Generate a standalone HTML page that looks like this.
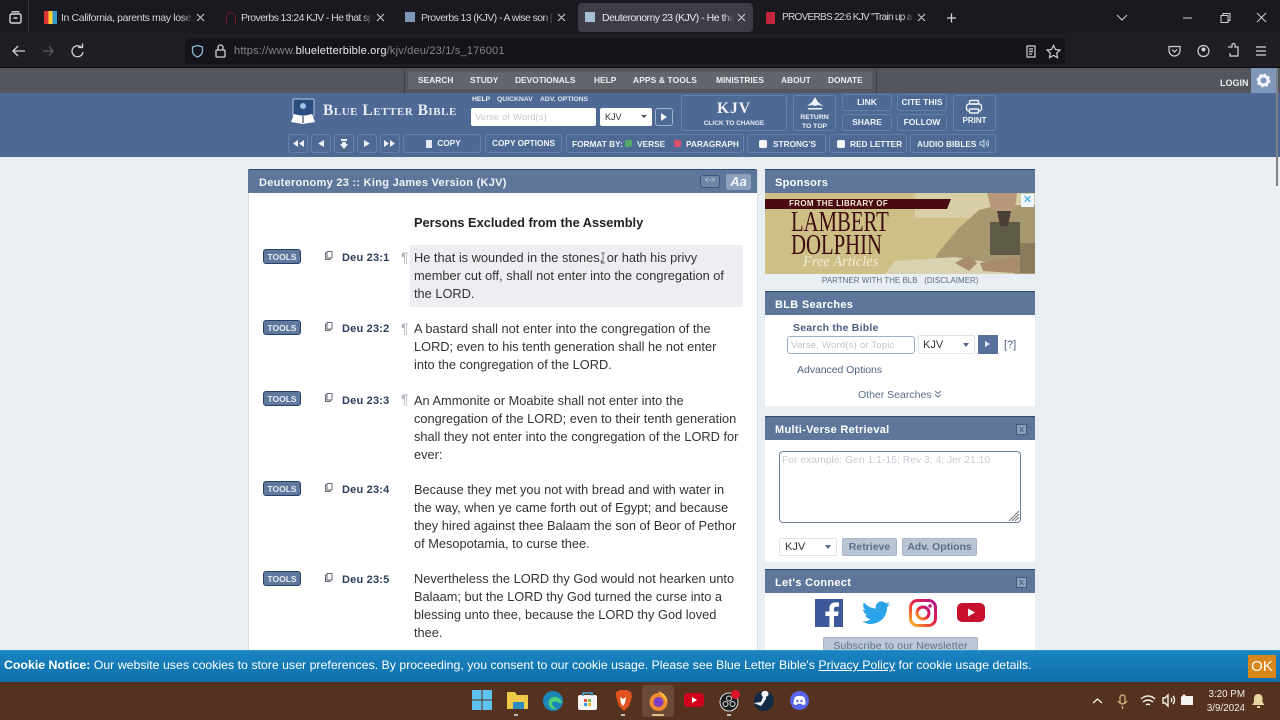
<!DOCTYPE html>
<html><head><meta charset="utf-8"><style>
html,body{margin:0;padding:0;width:1280px;height:720px;overflow:hidden;background:#e9eef2;font-family:"Liberation Sans",sans-serif}
.a,.t{position:absolute}
.t{white-space:nowrap}
.tab{font-size:10.5px;color:#d4d3d8;top:12px;letter-spacing:-.38px;overflow:hidden;-webkit-mask-image:linear-gradient(90deg,#000 92%,transparent);mask-image:linear-gradient(90deg,#000 92%,transparent)}
.nav{font-size:8.4px;font-weight:bold;color:#eceff2;top:75px}
.btn{position:absolute;border:1px solid #6480a6;border-radius:3px;box-sizing:border-box;color:#f0f3f7;font-size:8.5px;font-weight:bold;text-align:center}
.v{font-size:12.8px;color:#333;line-height:18px}
.ref{font-size:11px;font-weight:bold;color:#2c3e5e;letter-spacing:.2px}
.tools{position:absolute;left:263px;width:38px;height:15px;box-sizing:border-box;background:#5f789c;border:1px solid #27406a;border-radius:3px;color:#e6ebf2;font-size:8.5px;font-weight:bold;text-align:center;line-height:14px}
.ph{position:absolute;background:#5e7699;border-top:1px solid #2f4a75;box-sizing:border-box;color:#fff;font-size:11px;font-weight:bold;letter-spacing:.3px;left:765px;width:270px;height:24px;line-height:26px;padding-left:10px}
.panel{position:absolute;left:765px;width:270px;background:#fff}
.cl{position:absolute;left:1016px;width:11px;height:11px;background:#8fa2bc;border:1px solid #3f5a82;box-sizing:border-box;color:#4f6585;font-size:9px;font-weight:bold;text-align:center;line-height:8px}
.p{font-size:14px;color:#b0b5bc}
</style></head><body>
<!-- browser chrome -->
<div class="a" style="left:0;top:0;width:1280px;height:33px;background:#1a1920"></div>
<div class="a" style="left:0;top:33px;width:1280px;height:34px;background:#1f1e25"></div>
<div class="a" style="left:0;top:67px;width:1280px;height:1px;background:#0c0c10"></div>
<div class="a" style="left:28px;top:0;width:1px;height:33px;background:#3a3940"></div>
<svg class="a" style="left:8px;top:10px" width="16" height="16" fill="none" stroke="#d8d8dc" stroke-width="1.4"><rect x="2" y="4" width="11" height="9" rx="1.5"/><path d="M3.5 1.8h8M5.5 8h4"/></svg>
<div class="a" style="left:578px;top:3px;width:175px;height:29px;background:#3e3d47;border-radius:4px"></div>

<div class="a" style="left:44px;top:11px;width:13px;height:13px;background:linear-gradient(90deg,#d33 0 33%,#fc3 33% 66%,#39c 66%)"></div>
<div class="t tab" style="left:61px;width:132px">In California, parents may lose custody</div>
<div class="a" style="left:226px;top:12px;width:10px;height:12px;border:1.5px solid #6d1a24;border-bottom:0;border-radius:6px 6px 0 0;box-sizing:border-box"></div>
<div class="t tab" style="left:241px;width:132px;letter-spacing:-.6px">Proverbs 13:24 KJV - He that spareth</div>
<div class="a" style="left:405px;top:12px;width:10px;height:10px;background:#7d97b8"></div>
<div class="t tab" style="left:421px;width:133px;letter-spacing:-.6px">Proverbs 13 (KJV) - A wise son [</div>
<div class="a" style="left:585px;top:12px;width:10px;height:10px;background:#a6bdd6"></div>
<div class="t tab" style="left:602px;width:132px;color:#e8e8ec;letter-spacing:-.5px">Deuteronomy 23 (KJV) - He that is</div>
<div class="a" style="left:766px;top:12px;width:9px;height:12px;background:#c2243d"></div>
<div class="t tab" style="left:782px;width:132px;font-size:10px;letter-spacing:-.7px">PROVERBS 22:6 KJV "Train up a child</div>
<svg class="a" style="left:0;top:0" width="1280" height="68" fill="none" stroke="#d2d2d6" stroke-width="1">
<path d="M197 14l7 7m0-7l-7 7M377 14l7 7m0-7l-7 7M558 14l7 7m0-7l-7 7M738 14l7 7m0-7l-7 7M918 14l7 7m0-7l-7 7"/>
<path d="M947 18h9M951.500 13.500v9" stroke-width="1.300"/>
<path d="M1117 15l5 5 5-5"/>
<path d="M1183 18h9"/>
<path d="M1221 15.500h7v7h-7zM1223 15.500v-2h7v7h-2"/>
<path d="M1257 13l9 9m0-9l-9 9"/>
<path d="M25 51H14m4-5l-5 5 5 5" stroke-width="1.300"/>
<path d="M43 51h10m-4-4.500l4 4.500-4 4.500" stroke="#5e5d64" stroke-width="1.300"/>
<path d="M82 48a5.500 5.500 0 1 0 1 4M78 47.500h4.500v-4" stroke-width="1.300"/>
<path d="M1169 46.500h11v4a5.500 5.500 0 0 1-11 0zM1172 49.500l2.500 2.500 2.500-2.500" stroke-width="1.200"/>
<circle cx="1203.500" cy="51" r="5.500" stroke-width="1.200"/><circle cx="1203.500" cy="49.500" r="2" fill="#d2d2d6" stroke="none"/>
<path d="M1228 47h4v-2a1.500 1.500 0 0 1 3 0v2h3v9h-8v-3" stroke-width="1.200"/>
<path d="M1256 47h10M1256 51h10M1256 55h10" stroke-width="1.300"/>
</svg>
<div class="a" style="left:185px;top:38px;width:880px;height:26px;background:#15141a;border-radius:3px"></div>
<svg class="a" style="left:185px;top:38px" width="50" height="26" fill="none" stroke="#d2d2d6" stroke-width="1.300"><path d="M12.500 7.500l5 1.500v4c0 3-2.500 5-5 6-2.500-1-5-3-5-6V9z" stroke="#8fb8d8"/><rect x="31" y="12" width="9" height="7" rx="1"/><path d="M33 12V9.500a2.500 2.500 0 0 1 5 0V12"/></svg>
<div class="t" style="left:234px;top:45px;font-size:11.100px;color:#85848b;letter-spacing:.15px">https://www.<span style="color:#e8e8ec">blueletterbible.org</span>/kjv/deu/23/1/s_176001</div>
<svg class="a" style="left:1020px;top:38px" width="46" height="26" fill="none" stroke="#d2d2d6" stroke-width="1.200"><path d="M7 8h8v11H7zM9 11h4M9 13.500h4M9 16h3"/><path d="M33.500 7.500l2 4 4.500.6-3.300 3 .8 4.500-4-2.200-4 2.200.8-4.500-3.300-3 4.500-.6z"/></svg>

<!-- site nav -->
<div class="a" style="left:0;top:68px;width:1280px;height:25px;background:#53565c"></div>
<div class="a" style="left:404px;top:68px;width:1px;height:25px;background:#3e4045"></div>
<div class="a" style="left:876px;top:68px;width:1px;height:25px;background:#3e4045"></div>
<div class="a" style="left:408px;top:72px;width:464px;height:17px;background:#62666c"></div>
<div class="t nav" style="left:418px">SEARCH</div>
<div class="t nav" style="left:470px">STUDY</div>
<div class="t nav" style="left:515px">DEVOTIONALS</div>
<div class="t nav" style="left:594px">HELP</div>
<div class="t nav" style="left:633px;letter-spacing:.15px">APPS &amp; TOOLS</div>
<div class="t nav" style="left:716px">MINISTRIES</div>
<div class="t nav" style="left:781px">ABOUT</div>
<div class="t nav" style="left:828px">DONATE</div>
<div class="t" style="left:1220px;top:78px;font-size:9px;font-weight:bold;color:#e8eaee">LOGIN</div>
<div class="a" style="left:1251px;top:68px;width:25px;height:25px;background:#7e96b8"></div>
<svg class="a" style="left:1256px;top:73px" width="15" height="15"><circle cx="7.500" cy="7.500" r="4.500" fill="none" stroke="#f0f3f7" stroke-width="3"/><circle cx="7.500" cy="7.500" r="6" fill="none" stroke="#f0f3f7" stroke-width="2" stroke-dasharray="2.400 2.300"/></svg>

<!-- blue header -->
<div class="a" style="left:0;top:93px;width:1280px;height:64px;background:#4e6a94"></div>
<svg class="a" style="left:290px;top:98px" width="28" height="28"><rect x="3" y="1" width="21" height="17" rx="1" fill="#2a4d80" stroke="#b8c8da"/><circle cx="13" cy="8" r="3" fill="#9cc4e6"/><path d="M1 24l3-8 9 2 9-2 3 8-12 2z" fill="#fff"/><path d="M13 18v7" stroke="#223" stroke-width="1"/></svg>
<div class="t" style="left:323px;top:102px;font-family:'Liberation Serif',serif;font-size:15.500px;font-weight:bold;color:#e6ebf3;letter-spacing:.52px;font-variant:small-caps">Blue Letter Bible</div>
<div class="t" style="left:472px;top:96px;font-size:6.800px;font-weight:bold;color:#eef1f5">HELP</div>
<div class="t" style="left:497px;top:96px;font-size:6.800px;font-weight:bold;color:#dfe5ec">QUICKNAV</div>
<div class="t" style="left:540px;top:96px;font-size:6.800px;font-weight:bold;color:#dfe5ec">ADV. OPTIONS</div>
<div class="a" style="left:471px;top:108px;width:125px;height:18px;background:#fff;border-radius:2px"></div>
<div class="t" style="left:475px;top:112px;font-size:9.500px;color:#c6c9ce">Verse or Word(s)</div>
<div class="a" style="left:600px;top:108px;width:52px;height:18px;background:#fff;border-radius:2px"></div>
<div class="t" style="left:605px;top:112px;font-size:9px;color:#333">KJV</div>
<div class="a" style="left:641px;top:115px;border:3px solid transparent;border-top:3px solid #555;border-bottom:0"></div>
<div class="btn" style="left:655px;top:108px;width:18px;height:18px;border-color:#9fb2cc"></div>
<div class="a" style="left:661px;top:113px;border:4px solid transparent;border-left:6px solid #f2f4f7;border-right:0"></div>
<div class="btn" style="left:681px;top:95px;width:106px;height:36px"></div>
<div class="t" style="left:681px;width:106px;text-align:center;top:100px;font-family:'Liberation Serif',serif;font-size:15.500px;font-weight:bold;color:#f2f4f7;letter-spacing:1px">KJV</div>
<div class="t" style="left:681px;width:106px;text-align:center;top:120px;font-size:6.500px;font-weight:bold;color:#e6ebf2">CLICK TO CHANGE</div>
<div class="btn" style="left:793px;top:95px;width:43px;height:36px"></div>
<svg class="a" style="left:805px;top:96px" width="20" height="16"><path d="M10 1l3 5 5 4-5-1-3 1-3-1-5 1 5-4z M3 12h14v1.500H3z" fill="#eef1f5"/></svg>
<div class="t" style="left:793px;width:43px;text-align:center;top:113px;font-size:6.800px;font-weight:bold;color:#eef1f5;line-height:9px">RETURN<br>TO TOP</div>
<div class="btn" style="left:842px;top:94px;width:50px;height:17px;line-height:15px">LINK</div>
<div class="btn" style="left:842px;top:114px;width:50px;height:17px;line-height:15px">SHARE</div>
<div class="btn" style="left:897px;top:94px;width:50px;height:17px;line-height:15px">CITE THIS</div>
<div class="btn" style="left:897px;top:114px;width:50px;height:17px;line-height:15px">FOLLOW</div>
<div class="btn" style="left:953px;top:95px;width:43px;height:36px;padding-top:20px;font-size:8px">PRINT</div>
<svg class="a" style="left:965px;top:99px" width="19" height="16" fill="none" stroke="#eef1f5" stroke-width="1.400"><rect x="1.500" y="5" width="15" height="7" rx="2.500"/><rect x="4.500" y="1.500" width="9" height="3.500" rx="1"/><rect x="4.500" y="10" width="9" height="4" rx="1" fill="#4e6a94"/></svg>

<div class="btn" style="left:288px;top:134px;width:20px;height:19px"></div>
<div class="btn" style="left:311px;top:134px;width:20px;height:19px"></div>
<div class="btn" style="left:334px;top:134px;width:20px;height:19px"></div>
<div class="btn" style="left:357px;top:134px;width:20px;height:19px"></div>
<div class="btn" style="left:380px;top:134px;width:20px;height:19px"></div>
<svg class="a" style="left:288px;top:134px" width="112" height="19" fill="#eef1f5"><path d="M10 6v7L5 9.500zM16 6v7l-5-3.500zM36 6v7l-6-3.500zM53 5h6v2h-6zM56 15l-4-5h8zM54 8h4v3h-4zM76 6v7l6-3.500zM96 6v7l5-3.500zM102 6v7l5-3.500z"/></svg>
<div class="btn" style="left:403px;top:134px;width:78px;height:19px;line-height:17px;padding-left:14px;font-size:8.300px">COPY</div>
<div class="a" style="left:426px;top:140px;width:6px;height:8px;background:#e0e6ee"></div>
<div class="btn" style="left:485px;top:134px;width:77px;height:19px;line-height:17px;font-size:8.300px">COPY OPTIONS</div>
<div class="btn" style="left:566px;top:134px;width:178px;height:19px"></div>
<div class="t" style="left:572px;top:139px;font-size:8.300px;font-weight:bold;color:#f0f3f7">FORMAT BY:</div>
<div class="a" style="left:625px;top:140px;width:7px;height:7px;background:#55a868;border-radius:1px"></div>
<div class="t" style="left:637px;top:139px;font-size:8.300px;font-weight:bold;color:#f0f3f7">VERSE</div>
<div class="a" style="left:674px;top:140px;width:7px;height:7px;background:#d9506a;border-radius:1px"></div>
<div class="t" style="left:686px;top:139px;font-size:8.300px;font-weight:bold;color:#f0f3f7">PARAGRAPH</div>
<div class="btn" style="left:747px;top:134px;width:79px;height:19px"></div>
<div class="a" style="left:759px;top:140px;width:8px;height:8px;background:#f4f6f9;border-radius:2px"></div>
<div class="t" style="left:773px;top:139px;font-size:8.300px;font-weight:bold;color:#f0f3f7">STRONG'S</div>
<div class="btn" style="left:829px;top:134px;width:78px;height:19px"></div>
<div class="a" style="left:837px;top:140px;width:8px;height:8px;background:#f4f6f9;border-radius:2px"></div>
<div class="t" style="left:850px;top:139px;font-size:8.300px;font-weight:bold;color:#f0f3f7">RED LETTER</div>
<div class="btn" style="left:910px;top:134px;width:86px;height:19px"></div>
<div class="t" style="left:917px;top:139px;font-size:8.300px;font-weight:bold;color:#f0f3f7">AUDIO BIBLES</div>
<svg class="a" style="left:979px;top:139px" width="10" height="9" fill="none" stroke="#c5d0df"><path d="M1 3h2l2-2v7L3 6H1zM7 2.500c1 1 1 3 0 4M8.500 1c1.500 2 1.500 5 0 7"/></svg>

<!-- scrollbar -->
<div class="a" style="left:1276px;top:68px;width:2px;height:118px;background:#7d8288"></div>

<!-- main panel -->
<div class="a" style="left:248px;top:169px;width:510px;height:490px;background:#fff;border-right:1px solid #d5dde6;border-left:1px solid #d5dde6;box-sizing:border-box"></div>
<div class="a" style="left:248px;top:169px;width:509px;height:24px;background:#5e7699;border-top:1px solid #2f4a75;box-sizing:border-box;border-radius:2px 2px 0 0"></div>
<div class="t" style="left:259px;top:177px;font-size:11px;font-weight:bold;color:#f2f4f7;letter-spacing:.28px">Deuteronomy 23 :: King James Version (KJV)</div>
<div class="a" style="left:700px;top:175px;width:20px;height:13px;background:#6f86a6;border:1px solid #3b5680;border-radius:3px;box-sizing:border-box;color:#dfe6ee;font-size:7px;text-align:center;line-height:10px">&lt;-&gt;</div>
<div class="a" style="left:726px;top:174px;width:25px;height:16px;background:#8ca0bb;border-radius:2px;color:#f1f4f7;font-size:13px;font-weight:bold;font-style:italic;text-align:center;line-height:16px">Aa</div>
<div class="t" style="left:414px;top:215px;font-size:12.800px;font-weight:bold;color:#222">Persons Excluded from the Assembly</div>
<div class="a" style="left:410px;top:245px;width:333px;height:62px;background:#eceef1;border-radius:2px"></div>

<div class="tools" style="top:249px">TOOLS</div>
<div class="tools" style="top:320px">TOOLS</div>
<div class="tools" style="top:391px">TOOLS</div>
<div class="tools" style="top:481px">TOOLS</div>
<div class="tools" style="top:571px">TOOLS</div>
<svg class="a" style="left:324px;top:250px" width="10" height="340" fill="none" stroke="#667"><path d="M3 1.500h5v6.500H3zM3 3H1.500v6.500H6V8M3 72.500h5v6.500H3zM3 74H1.500v6.500H6V79M3 143.500h5v6.500H3zM3 145H1.500v6.500H6V150M3 233.500h5v6.500H3zM3 235H1.500v6.500H6V240M3 323.500h5v6.500H3zM3 325H1.500v6.500H6V330"/></svg>
<div class="t ref" style="left:342px;top:252px">Deu 23:1</div>
<div class="t ref" style="left:342px;top:323px">Deu 23:2</div>
<div class="t ref" style="left:342px;top:395px">Deu 23:3</div>
<div class="t ref" style="left:342px;top:484px">Deu 23:4</div>
<div class="t ref" style="left:342px;top:574px">Deu 23:5</div>
<div class="t p" style="left:401px;top:249px">¶</div>
<div class="t p" style="left:401px;top:320px">¶</div>
<div class="t p" style="left:401px;top:391px">¶</div>

<div class="t v" style="left:414px;top:249px">He that is wounded in the stones, or hath his privy<br>member cut off, shall not enter into the congregation of<br>the LORD.</div>
<svg class="a" style="left:600px;top:252px" width="6" height="12" fill="none" stroke="#555" stroke-width=".8"><path d="M1 1h4M3 1v10M1 11h4"/></svg>
<div class="t v" style="left:414px;top:320px">A bastard shall not enter into the congregation of the<br>LORD; even to his tenth generation shall he not enter<br>into the congregation of the LORD.</div>
<div class="t v" style="left:414px;top:392px">An Ammonite or Moabite shall not enter into the<br>congregation of the LORD; even to their tenth generation<br>shall they not enter into the congregation of the LORD for<br>ever:</div>
<div class="t v" style="left:414px;top:481px">Because they met you not with bread and with water in<br>the way, when ye came forth out of Egypt; and because<br>they hired against thee Balaam the son of Beor of Pethor<br>of Mesopotamia, to curse thee.</div>
<div class="t v" style="left:414px;top:570px">Nevertheless the LORD thy God would not hearken unto<br>Balaam; but the LORD thy God turned the curse into a<br>blessing unto thee, because the LORD thy God loved<br>thee.</div>

<!-- sidebar -->
<div class="ph" style="top:169px">Sponsors</div>
<div class="a" style="left:765px;top:193px;width:270px;height:81px;background:#cdbf86;overflow:hidden">
<svg class="a" style="left:0;top:0" width="270" height="81"><rect x="150" y="0" width="120" height="25" fill="#d8cfa6"/><path d="M168 81l4-20 22-26 20-18 20-5 36 0v69z" fill="#a89870"/><path d="M222 0h30l-2 15-12 6-12-6z" fill="#b8987a"/><path d="M225 29h30v33h-30z" fill="#5d5a46"/><path d="M232 18h14l-3 15h-8z" fill="#4a4038"/><path d="M120 81l10-13 60-4 50 8 10 9z" fill="#d9d2b0"/><path d="M190 70l14-8 8 8-8 8z" fill="#a88c6c"/><path d="M215 70l35-6 10 8-12 8-30-2z" fill="#a88c6c"/><path d="M255 50h15v30h-15z" fill="#8a7a5c"/></svg>
<svg class="a" style="left:0;top:6px" width="190" height="10"><path d="M0 0h186l-4 10H0z" fill="#4a0a12"/></svg>
<div class="t" style="left:24px;top:6px;font-size:8px;font-weight:bold;color:#f4e9d0;letter-spacing:.35px">FROM THE LIBRARY OF</div>
<div class="t" style="left:26px;top:18px;font-family:'Liberation Serif',serif;font-size:28px;color:#3e0b10;line-height:23px;transform:scaleX(.74);transform-origin:0 0">LAMBERT<br>DOLPHIN</div>
<div class="t" style="left:38px;top:61px;font-family:'Liberation Serif',serif;font-style:italic;font-size:14.500px;color:#f3eed8">Free Articles</div>
<div class="a" style="left:256px;top:1px;width:13px;height:13px;background:#eef6fa;color:#2ea6d8;font-size:11px;text-align:center;line-height:13px">✕</div>
</div>
<div class="t" style="left:822px;top:276px;font-size:8px;color:#5e6e82">PARTNER WITH THE BLB &nbsp;&nbsp;(DISCLAIMER)</div>

<div class="ph" style="top:291px">BLB Searches</div>
<div class="panel" style="top:315px;height:91px"></div>
<div class="t" style="left:793px;top:322px;font-size:10.500px;font-weight:bold;color:#4a5f80;letter-spacing:.2px">Search the Bible</div>
<div class="a" style="left:787px;top:336px;width:128px;height:18px;border:1px solid #9fb0c6;border-radius:3px;box-sizing:border-box;background:#fff"></div>
<div class="t" style="left:791px;top:340px;font-size:9.500px;color:#c0c4ca;letter-spacing:.2px">Verse, Word(s) or Topic</div>
<div class="a" style="left:918px;top:335px;width:57px;height:19px;border:1px solid #dfe3e8;border-radius:2px;box-sizing:border-box"></div>
<div class="t" style="left:923px;top:339px;font-size:11px;color:#333">KJV</div>
<div class="a" style="left:963px;top:343px;border:3.500px solid transparent;border-top:4px solid #55688a;border-bottom:0"></div>
<div class="a" style="left:978px;top:335px;width:20px;height:19px;background:#56729c"></div>
<div class="a" style="left:985px;top:341px;border:3.500px solid transparent;border-left:5px solid #eef1f5;border-right:0"></div>
<div class="t" style="left:1004px;top:339px;font-size:11px;color:#4a5f80">[?]</div>
<div class="t" style="left:797px;top:364px;font-size:10.500px;color:#4f6484;letter-spacing:-.05px">Advanced Options</div>
<div class="t" style="left:858px;top:389px;font-size:10.500px;color:#5a6e8c">Other Searches</div>
<svg class="a" style="left:934px;top:390px" width="8" height="8" fill="none" stroke="#5a6e8c"><path d="M1 1l3 2.500L7 1M1 4.500L4 7l3-2.500"/></svg>

<div class="ph" style="top:416px">Multi-Verse Retrieval</div>
<div class="cl" style="top:424px">x</div>
<div class="panel" style="top:440px;height:122px"></div>
<div class="a" style="left:779px;top:451px;width:242px;height:72px;border:1px solid #6e7f9a;border-radius:4px;box-sizing:border-box"></div>
<div class="t" style="left:782px;top:455px;font-size:10.350px;color:#c8ccd2">For example: Gen 1:1-15; Rev 3; 4; Jer 21:10</div>
<svg class="a" style="left:1008px;top:510px" width="12" height="12" stroke="#777"><path d="M1 11L11 1M4 11l7-7M7 11l4-4"/></svg>
<div class="a" style="left:779px;top:538px;width:58px;height:18px;border:1px solid #dfe3e8;border-radius:2px;box-sizing:border-box"></div>
<div class="t" style="left:785px;top:541px;font-size:11px;color:#333">KJV</div>
<div class="a" style="left:825px;top:545px;border:3.500px solid transparent;border-top:4px solid #55688a;border-bottom:0"></div>
<div class="a" style="left:842px;top:538px;width:55px;height:18px;background:#b9c5d5;border:1px solid #aab7c9;box-sizing:border-box;border-radius:2px;color:#5c6f8a;font-size:10.500px;font-weight:bold;text-align:center;line-height:16px">Retrieve</div>
<div class="a" style="left:902px;top:538px;width:75px;height:18px;background:#b9c5d5;border:1px solid #aab7c9;box-sizing:border-box;border-radius:2px;color:#5c6f8a;font-size:10.500px;font-weight:bold;text-align:center;line-height:16px">Adv. Options</div>

<div class="ph" style="top:569px">Let's Connect</div>
<div class="cl" style="top:577px">x</div>
<div class="panel" style="top:593px;height:60px"></div>
<svg class="a" style="left:815px;top:599px" width="30" height="28"><rect width="28" height="28" fill="#3b5998"/><path d="M19 28V17h4l.6-4.500H19V10c0-1.500.5-2.300 2.400-2.300H24V3.600c-.5 0-2-.2-3.600-.2-3.500 0-6 2.200-6 6v3.100h-4V17h4v11z" fill="#fff"/></svg>
<svg class="a" style="left:862px;top:601px" width="28" height="24" viewBox="0 0 24 20"><path d="M24 2.400c-.9.4-1.800.7-2.800.8 1-.6 1.800-1.600 2.200-2.700-1 .6-2 1-3.100 1.200A4.900 4.900 0 0 0 11.900 6.200C7.800 6 4.200 4 1.700.9c-1.300 2.200-.7 5 1.500 6.500-.8 0-1.600-.2-2.200-.6 0 2.300 1.600 4.400 4 4.900-.7.200-1.500.2-2.200.1.600 2 2.400 3.300 4.600 3.400A9.900 9.900 0 0 1 0 17.200 14 14 0 0 0 21.500 4.900c1-.7 1.800-1.500 2.500-2.500z" fill="#2aa3e8"/></svg>
<svg class="a" style="left:909px;top:599px" width="28" height="28" fill="none"><defs><linearGradient id="ig" x1="0" y1="1" x2="1" y2="0"><stop offset="0" stop-color="#fdb42a"/><stop offset=".5" stop-color="#e8263e"/><stop offset="1" stop-color="#b3128c"/></linearGradient></defs><rect x="1.500" y="1.500" width="25" height="25" rx="7" stroke="url(#ig)" stroke-width="3"/><circle cx="14" cy="14" r="6" stroke="url(#ig)" stroke-width="3"/><circle cx="21" cy="7" r="1.700" fill="#c5157a"/></svg>
<svg class="a" style="left:957px;top:603px" width="28" height="20"><rect width="28" height="19" rx="5" fill="#c8102e"/><path d="M11 5.500v8l7-4z" fill="#fff"/></svg>
<div class="a" style="left:823px;top:637px;width:155px;height:18px;background:#bcc8d8;border:1px solid #aab7c9;box-sizing:border-box;border-radius:2px;color:#5c6f8a;font-size:10.500px;text-align:center;line-height:16px;letter-spacing:.2px">Subscribe to our Newsletter</div>

<!-- cookie -->
<div class="a" style="left:0;top:651px;width:1280px;height:31px;background:linear-gradient(#1a84c2,#0d6fa8);box-shadow:0 -1px 0 #2f95cf"></div>
<div class="t" style="left:4px;top:658px;font-size:12.340px;color:#fff"><b>Cookie Notice:</b> Our website uses cookies to store user preferences. By proceeding, you consent to our cookie usage. Please see Blue Letter Bible's <u>Privacy Policy</u> for cookie usage details.</div>
<div class="a" style="left:1248px;top:655px;width:28px;height:23px;background:#d9861a;color:#fff;font-size:15px;text-align:center;line-height:23px">OK</div>

<!-- taskbar -->
<div class="a" style="left:0;top:682px;width:1280px;height:38px;background:#54321f"></div>
<div class="a" style="left:642px;top:685px;width:32px;height:32px;background:#6a4a36;border-radius:3px"></div>
<div class="a" style="left:652px;top:714px;width:12px;height:2px;background:#e0c080;border-radius:1px"></div>
<svg class="a" style="left:472px;top:690px" width="20" height="20"><path d="M0 0h9.500v9.500H0zM10.500 0H20v9.500h-9.500zM0 10.500h9.500V20H0zM10.500 10.500H20V20h-9.500z" fill="#5cc4ee"/></svg>
<svg class="a" style="left:507px;top:691px" width="21" height="18"><path d="M0 1h8l2 3h11v14H0z" fill="#f0c948"/><rect x="6" y="11" width="11" height="7" fill="#2e8ac2"/></svg>
<svg class="a" style="left:543px;top:691px" width="20" height="20"><circle cx="10" cy="10" r="10" fill="#1a87b8"/><path d="M6 14c-2-4 2-9 7-8 4 1 6 4 6 6-3 1-6-3-9-1-2 1-1 5 4 7-4 1-7-1-8-4z" fill="#4fd17a"/></svg>
<svg class="a" style="left:578px;top:691px" width="20" height="19"><rect y="4" width="19" height="15" rx="2" fill="#f4f4f4"/><path d="M5 5V2h9v3" fill="none" stroke="#4aa8d8" stroke-width="1.500"/><path d="M6 8h3v3H6z" fill="#e0523a"/><path d="M10 8h3v3h-3z" fill="#7ab83a"/><path d="M6 12h3v3H6z" fill="#2e9ae0"/><path d="M10 12h3v3h-3z" fill="#f0b92a"/></svg>
<svg class="a" style="left:615px;top:690px" width="17" height="21"><path d="M1 2l4-2h7l4 2 1 5-3 9-5 5-5-5-3-9z" fill="#e0521f"/><path d="M5 7l3 2 3-2-1 6-2 3-2-3z" fill="#fff"/></svg>
<svg class="a" style="left:649px;top:691px" width="19" height="20"><circle cx="9.500" cy="11" r="9" fill="#f28a30"/><path d="M9 0c6 2 10 6 9 12-2-5-6-8-9-12z" fill="#f8c23c"/><circle cx="9.500" cy="11" r="5" fill="#7d3ec4"/></svg>
<svg class="a" style="left:684px;top:692px" width="20" height="17"><rect y="1" width="20" height="14" rx="4" fill="#d0021b"/><path d="M8 5v6l5-3z" fill="#fff"/></svg>
<svg class="a" style="left:719px;top:690px" width="22" height="22"><circle cx="10" cy="12" r="9" fill="#1c1c20" stroke="#ddd"/><circle cx="10" cy="8.500" r="2.500" fill="none" stroke="#ddd"/><circle cx="6.500" cy="14" r="2.500" fill="none" stroke="#ddd"/><circle cx="13.500" cy="14" r="2.500" fill="none" stroke="#ddd"/><circle cx="16.500" cy="4.500" r="4.500" fill="#e01428"/></svg>
<svg class="a" style="left:754px;top:691px" width="20" height="20"><circle cx="10" cy="10" r="10" fill="#122a45"/><path d="M0 12l7 3 3-4 3-5a3.500 3.500 0 1 0-4 0l-2 5z" fill="#f2f4f7"/><circle cx="14" cy="7" r="2" fill="#122a45"/></svg>
<svg class="a" style="left:790px;top:691px" width="19" height="19"><circle cx="9.500" cy="9.500" r="9.500" fill="#5865e8"/><path d="M5 6c3-1.500 6-1.500 9 0 1 2 1.500 4 1.500 7-1 .7-2 1-3 1l-.7-1.200H7.200L6.500 14c-1 0-2-.3-3-1 0-3 .5-5 1.500-7z" fill="#fff"/><circle cx="7.500" cy="10" r="1.200" fill="#5865e8"/><circle cx="11.500" cy="10" r="1.200" fill="#5865e8"/></svg>
<div class="a" style="left:514px;top:714px;width:4px;height:2px;background:#bbb"></div>
<div class="a" style="left:621px;top:714px;width:4px;height:2px;background:#bbb"></div>
<div class="a" style="left:727px;top:714px;width:4px;height:2px;background:#bbb"></div>
<svg class="a" style="left:1090px;top:692px" width="100" height="18" fill="none" stroke="#f2efe9" stroke-width="1.400"><path d="M3 11l4.500-4L12 11"/><rect x="30" y="3" width="5" height="9" rx="2.500" stroke="#c9a878"/><path d="M28 9a5 5 0 0 0 9 0M32.500 14v3" stroke="#c9a878"/><path d="M51 7c4-4 10-4 14 0M53 10c3-2.500 7-2.500 10 0M56 13c1-1 3-1 4 0"/><path d="M73 6h2l3-3v11l-3-3h-2zM81 6c1 1 1 3 0 4M83 4c2 2 2 6 0 8"/></svg>
<svg class="a" style="left:1180px;top:693px" width="15" height="14"><path d="M1 4l3-3 2 2h7v9H1z" fill="#f4f2ee"/></svg>
<div class="t" style="left:1203px;top:688px;width:42px;text-align:right;font-size:9.800px;color:#f2efe9;line-height:14px">3:20 PM<br>3/9/2024</div>
<svg class="a" style="left:1252px;top:694px" width="13" height="14"><path d="M6.500 0a4 4 0 0 1 4 4v4l2 3H0l2-3V4a4 4 0 0 1 4.500-4zM5 12h3v2H5z" fill="#e8d8a0"/></svg>
</body></html>
